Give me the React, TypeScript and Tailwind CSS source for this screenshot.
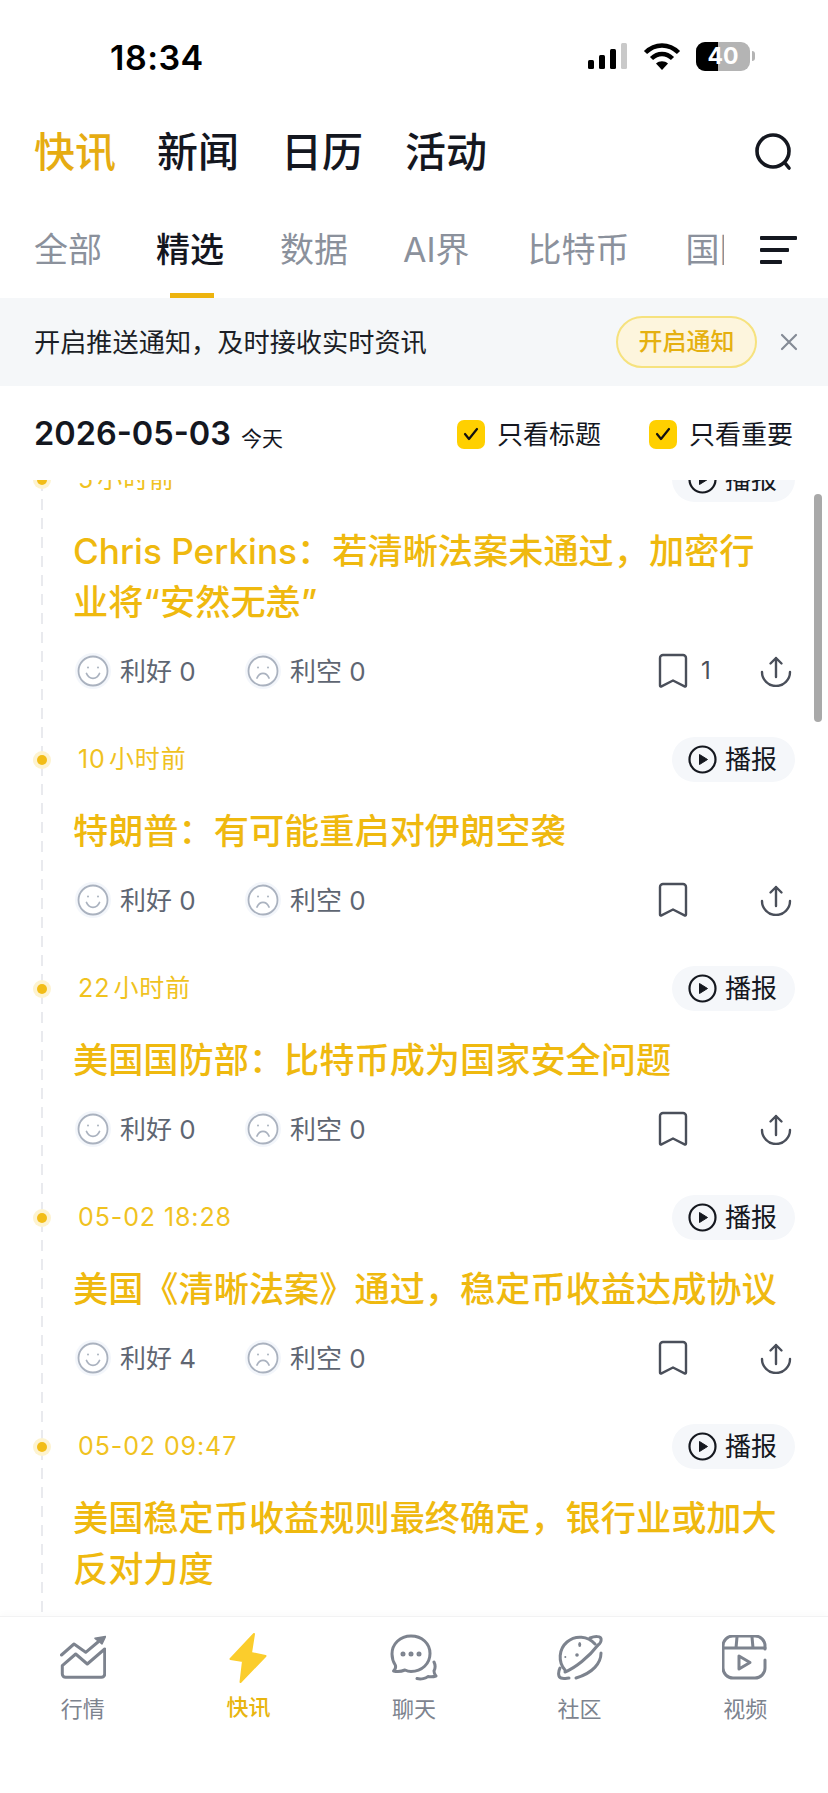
const NEWS = [
  { time: "5\u200a小时前", title: "Chris Perkins：若清晰法案未通过，加密行业将“安然无恙”", good: 0, saved: 1 },
  { time: "10\u200a小时前", title: "特朗普：有可能重启对伊朗空袭", good: 0 },
  { time: "22\u200a小时前", title: "美国国防部：比特币成为国家安全问题", good: 0 },
  { time: "05-02 18:28", title: "美国《清晰法案》通过，稳定币收益达成协议", good: 4 },
  { time: "05-02 09:47", title: "美国稳定币收益规则最终确定，银行业或加大反对力度", good: 0 },
];

const Face = ({ happy }: { happy?: boolean }) => (
  <svg width="36" height="36" viewBox="0 0 36 36" fill="none" className="shrink-0">
    <circle cx="18" cy="18" r="18" fill="#f3f6fb" />
    <circle cx="18" cy="18" r="14.5" fill="#fff" stroke="#aab2bf" strokeWidth="1.8" />
    <circle cx="13" cy="14.5" r="1" fill="#aab2bf" />
    <circle cx="23" cy="14.5" r="1" fill="#aab2bf" />
    <path
      d={happy ? "M11.5 20.5c1.5 3.4 3.8 4.8 6.500 4.800s5-1.400 6.500-4.800" : "M12 25c1.400-3.200 3.500-4.600 6-4.600s4.600 1.400 6 4.600"}
      stroke="#aab2bf"
      strokeWidth="1.8"
      strokeLinecap="round"
    />
  </svg>
);

const Bookmark = () => (
  <svg width="30" height="36" viewBox="0 0 30 36" fill="none">
    <path
      d="M2 5a3 3 0 0 1 3-3h20a3 3 0 0 1 3 3v27.500a1 1 0 0 1-1.500.900L15 27.500 3.500 33.400a1 1 0 0 1-1.500-.900z"
      stroke="#4a4f5a"
      strokeWidth="2.400"
      strokeLinejoin="round"
    />
  </svg>
);

const Share = () => (
  <svg width="32" height="32" viewBox="0 0 32 32" fill="none" stroke="#4a4f5a" strokeWidth="2.400" strokeLinecap="round" strokeLinejoin="round">
    <path d="M2 17a14 14 0 0 0 28 0" />
    <path d="M16 22V3M10.500 8.500 16 3l5.500 5.500" />
  </svg>
);

const NewsItem = ({ time, title, good, saved }: { time: string; title: string; good: number; saved?: number }) => (
  <div className="pb-[49px]">
    <div className="flex h-[45px] items-center justify-between">
      <div className="flex items-center">
        <span className="ml-[37px] h-[10px] w-[10px] rounded-full bg-[#f2bd18] ring-[4px] ring-[#fdf3d0]" />
        <span className="ml-[31px] text-[25px] tracking-[0.9px] text-[#f0c21f]">{time}</span>
      </div>
      <div className="mr-[33px] flex h-[45px] w-[123px] items-center rounded-full bg-[#f5f7fa] pl-[16px]">
        <svg width="29" height="29" viewBox="0 0 29 29" fill="none">
          <circle cx="14.500" cy="14.500" r="13" stroke="#15181f" strokeWidth="2.200" />
          <path d="M11.500 9.500v10l8-5z" fill="#15181f" stroke="#15181f" strokeWidth="1" strokeLinejoin="round" />
        </svg>
        <span className="ml-[8px] text-[26px] text-[#15181f]">播报</span>
      </div>
    </div>
    <h2 className="mt-[24px] pl-[73px] pr-[42px] text-[35.2px] leading-[51px] font-medium text-[#efb90f]">{title}</h2>
    <div className="mt-[26px] flex h-[34px] items-center pl-[75px] text-[26px] text-[#5f6672]">
      <Face happy />
      <span className="ml-[9px] w-[125px]">利好 {good}</span>
      <Face />
      <span className="ml-[9px]">利空 0</span>
      <div className="ml-auto flex w-[170px] items-center pr-[36px]">
        <Bookmark />
        <span className="ml-[13px] w-[14px] text-[24px] text-[#4a4f5a]">{saved}</span>
        <span className="ml-auto">
          <Share />
        </span>
      </div>
    </div>
  </div>
);

const BottomTab = ({ label, active, children }: { label: string; active?: boolean; children: React.ReactNode }) => (
  <div className="flex flex-col items-center pt-[16px]">
    <div className="flex h-[50px] w-[50px] items-center justify-center">{children}</div>
    <span className={active ? "mt-[9px] text-[22px] leading-[30px] font-medium text-[#e8b50f]" : "mt-[11px] text-[22px] leading-[30px] text-[#7d838e]"}>
      {label}
    </span>
  </div>
);

export default function App() {
  return (
    <div className="flex h-[1793px] w-[828px] flex-col overflow-hidden bg-white font-['Inter','Noto_Sans_CJK_SC',sans-serif]">
      {/* status bar */}
      <div className="flex h-[112px] items-center pl-[110px] pr-[73px] text-black">
        <span className="pt-[2px] text-[34px] tracking-[0.5px] font-semibold">18:34</span>
        <div className="ml-auto flex items-center">
          <svg width="39" height="26" viewBox="0 0 39 26">
            <rect x="0" y="17" width="6" height="9" rx="1.500" fill="#000" />
            <rect x="11" y="12" width="6" height="14" rx="1.500" fill="#000" />
            <rect x="22" y="6" width="6" height="20" rx="1.500" fill="#000" />
            <rect x="33" y="0" width="6" height="26" rx="1.500" fill="#c9c9c9" />
          </svg>
          <svg width="38" height="28" viewBox="0 0 38 28" className="ml-[16px]" fill="none" stroke="#000" strokeWidth="4.500">
            <path d="M2.500 10.500c9.500-9.500 23.500-9.500 33 0" />
            <path d="M8.500 16.500c6.200-6 14.800-6 21 0" />
            <path d="M19 28l-6-6.500c3.400-3 8.600-3 12 0z" fill="#000" stroke="none" />
          </svg>
          <div className="relative ml-[15px] flex h-[29px] w-[54px] overflow-hidden rounded-[9px] bg-[#b4b4b4]">
            <div className="h-full w-[22px] bg-black" />
            <span className="absolute inset-0 flex items-center justify-center text-[23px] leading-[29px] font-bold text-white">40</span>
          </div>
          <div className="ml-[2px] h-[10px] w-[3px] rounded-r-full bg-[#b4b4b4]" />
        </div>
      </div>

      {/* main tabs */}
      <div className="flex h-[80px] items-center pl-[34px] pr-[34px] text-[41px] font-medium text-[#14171f]">
        <span className="pt-[2px] text-[#e6ac12]">快讯</span>
        <span className="ml-[41px] pt-[2px]">新闻</span>
        <span className="ml-[42px] pt-[2px]">日历</span>
        <span className="ml-[42px] pt-[2px]">活动</span>
        <svg width="40" height="40" viewBox="0 0 40 40" fill="none" className="ml-auto" stroke="#14171f" strokeWidth="3.600" strokeLinecap="round">
          <circle cx="19" cy="19" r="16" />
          <path d="M31 31l4 5" />
        </svg>
      </div>

      {/* sub tabs */}
      <div className="relative flex h-[106px] text-[34px] text-[#8b919c]">
        <div className="flex h-full w-[724px] items-start overflow-hidden pl-[34px] pt-[32px]">
          <span className="shrink-0">全部</span>
          <span className="ml-[54px] shrink-0 font-medium text-[#14171f]">精选</span>
          <span className="ml-[56px] shrink-0">数据</span>
          <span className="ml-[55px] shrink-0">AI界</span>
          <span className="ml-[58px] shrink-0">比特币</span>
          <span className="ml-[56px] shrink-0">国际</span>
        </div>
        <svg width="38" height="28" viewBox="0 0 38 28" className="ml-[36px] mt-[44px]">
          <rect x="0" y="0" width="37" height="4" rx="1" fill="#14171f" />
          <rect x="0" y="12" width="29" height="4" rx="1" fill="#14171f" />
          <rect x="0" y="24" width="22" height="4" rx="1" fill="#14171f" />
        </svg>
        <span className="absolute bottom-0 left-[170px] h-[5px] w-[44px] bg-[#edb40f]" />
      </div>

      {/* push banner */}
      <div className="flex h-[88px] items-center bg-[#f5f7f9] pl-[34px] pr-[30px]">
        <span className="pt-[2px] text-[26.2px] text-[#1b1e26]">开启推送通知，及时接收实时资讯</span>
        <span className="ml-auto flex h-[52px] w-[141px] items-center justify-center rounded-full border-2 border-[#f6e27e] bg-[#fdf5dd] text-[24px] font-medium text-[#e5b010]">
          开启通知
        </span>
        <svg width="18" height="18" viewBox="0 0 18 18" className="ml-[23px]" stroke="#858b96" strokeWidth="2.200" strokeLinecap="round">
          <path d="M2 2l14 14M16 2L2 16" />
        </svg>
      </div>

      {/* date row */}
      <div className="flex h-[94px] items-center pl-[34px] pr-[35px] pt-[2px] text-[#14171f]">
        <span className="text-[32.5px] font-semibold">2026-05-03</span>
        <span className="ml-[10px] mt-[9px] text-[21px]">今天</span>
        <span className="ml-auto flex h-[29px] w-[28px] items-center justify-center rounded-[7px] bg-[#ffd000]">
          <svg width="16" height="14" viewBox="0 0 16 14" fill="none" stroke="#111" strokeWidth="2.200" strokeLinecap="round" strokeLinejoin="round">
            <path d="M2 7l4 5 8-10" />
          </svg>
        </span>
        <span className="ml-[12px] text-[26px]">只看标题</span>
        <span className="ml-[48px] flex h-[29px] w-[28px] items-center justify-center rounded-[7px] bg-[#ffd000]">
          <svg width="16" height="14" viewBox="0 0 16 14" fill="none" stroke="#111" strokeWidth="2.200" strokeLinecap="round" strokeLinejoin="round">
            <path d="M2 7l4 5 8-10" />
          </svg>
        </span>
        <span className="ml-[12px] text-[26px]">只看重要</span>
      </div>

      {/* scrolled feed */}
      <div className="relative min-h-0 flex-1 overflow-hidden">
        <div className="absolute bottom-0 left-[41px] top-0 w-[2px] bg-[repeating-linear-gradient(to_bottom,#e9eaee_0,#e9eaee_11px,transparent_11px,transparent_19px)]" />
        <div className="relative -mt-[23px]">
          {NEWS.map((item) => (
            <NewsItem key={item.time} {...item} />
          ))}
        </div>
        <div className="absolute right-[6px] top-[14px] h-[228px] w-[8px] rounded-full bg-[#a9a9a9]" />
      </div>

      {/* bottom nav */}
      <div className="grid h-[177px] grid-cols-5 border-t border-[#f2f2f3] bg-white shadow-[0_-3px_6px_rgba(0,0,0,0.02)]">
        <BottomTab label="行情">
          <svg width="46" height="46" viewBox="0 0 46 46" fill="none" stroke="#7d838e" strokeWidth="3" strokeLinecap="round" strokeLinejoin="round">
            <path d="M1.500 20L14 9l11.700 8.300L38 7" />
            <path d="M35 3.300 45.500 1.500 42 9z" fill="#7d838e" strokeWidth="1.500" />
            <path d="M2.300 30.700V39a3.300 3.300 0 0 0 3.300 3.300h35.800a3.300 3.300 0 0 0 3.300-3.300V14L27.300 29l-11.600-10z" />
          </svg>
        </BottomTab>
        <BottomTab label="快讯" active>
          <svg width="38" height="50" viewBox="0 0 38 50" fill="#fbcd2c" stroke="#fbcd2c" strokeWidth="2" strokeLinejoin="round">
            <path d="M25 1 1.500 26 14 28 11.500 49 36.500 23 22 20z" />
          </svg>
        </BottomTab>
        <BottomTab label="聊天">
          <svg width="48" height="48" viewBox="0 0 48 48" fill="none" stroke="#7d838e" strokeWidth="3" strokeLinecap="round" strokeLinejoin="round">
            <path d="M21 2C10 2 2 10 2 20c0 5 1.500 8.500 3.500 11.500.5 2-.5 4-2 5.500 4 1 8 .5 11.500-1 2 1 4 1.500 6 1.500 11 0 19-8 19-18S32 2 21 2z" />
            <path d="M44 28c1.500 3 1.500 6 0 9 0 2 1 4 2 5-3 1-5 1-8 .5-2 2-7 3-11 2" />
            <circle cx="13" cy="20" r="1" fill="#7d838e" />
            <circle cx="21" cy="20" r="1" fill="#7d838e" />
            <circle cx="29" cy="20" r="1" fill="#7d838e" />
          </svg>
        </BottomTab>
        <BottomTab label="社区">
          <svg width="46" height="46" viewBox="0 0 46 46" fill="none" stroke="#7d838e" strokeWidth="3" strokeLinecap="round" strokeLinejoin="round">
            <path d="M8 35A19 19 0 0 1 38 9" />
            <path d="M8 37C18 33 32 22 41 10" />
            <path d="M33 3c5-2 11-2 11 1 .5 2-1 5-3 6" />
            <path d="M44 18c0 10-8 20-25 25" />
            <path d="M3 33c-2 4-2 9 1 10 3 1 6 0 8 0" />
            <ellipse cx="22.700" cy="9.500" rx="1.500" ry="2.500" fill="#7d838e" stroke="none" />
            <circle cx="20" cy="20" r="1.800" fill="#7d838e" stroke="none" />
            <circle cx="8.300" cy="22" r="1" fill="#7d838e" stroke="none" />
          </svg>
        </BottomTab>
        <BottomTab label="视频">
          <svg width="46" height="46" viewBox="0 0 46 46" fill="none" stroke="#7d838e" strokeWidth="3" strokeLinecap="round" strokeLinejoin="round">
            <path d="M43 25v8a10 10 0 0 1-10 10H11A10 10 0 0 1 1 33V11A10 10 0 0 1 11 1h22a10 10 0 0 1 10 10v3" />
            <path d="M1 13h42M15 2l-1 11M30 2l1 11" />
            <path d="M17 21v13l11-6.500z" />
          </svg>
        </BottomTab>
      </div>
    </div>
  );
}
